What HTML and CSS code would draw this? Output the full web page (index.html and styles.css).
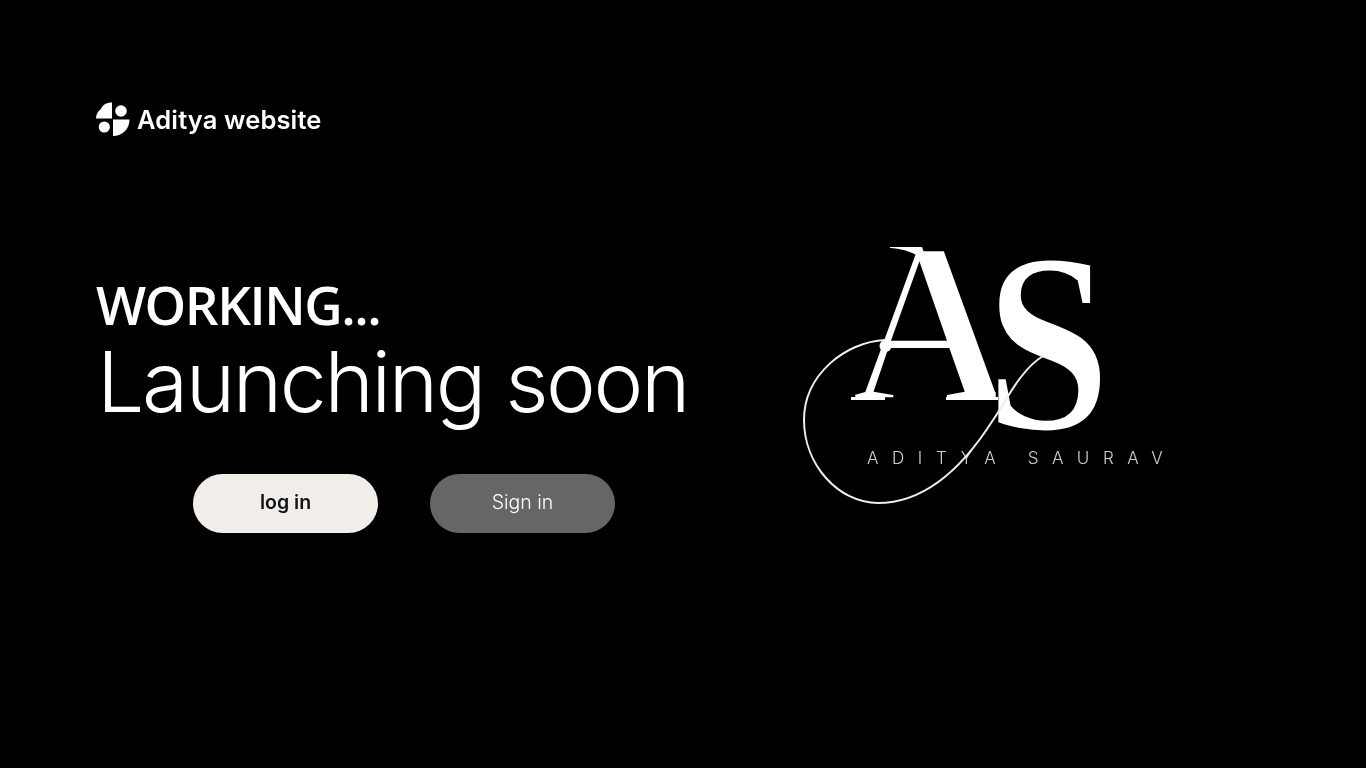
FILE: index.html
```html
<!DOCTYPE html>
<html lang="en">
<head>
<meta charset="utf-8">
<title>Aditya website</title>
<link rel="stylesheet" href="styles.css">
</head>
<body>
<div class="page">
  <header class="brand">
    <svg class="brand-icon" viewBox="0 0 34 34" aria-hidden="true">
      <path d="M16 .5V16.500H0C0 12.500 2 9 5 7C6.500 3 10 .5 16 .5Z"/>
      <circle cx="25" cy="9" r="5.800"/>
      <circle cx="8.300" cy="25" r="5.600"/>
      <path d="M17 17.500H33.500C33.500 27 26.500 34 17 34Z"/>
    </svg>
    <span class="brand-name">Aditya website</span>
  </header>
  <main class="hero">
    <section class="intro">
      <h2 class="kicker">WORKING...</h2>
      <h1 class="title">Launching soon</h1>
      <div class="actions">
        <a class="btn btn-light">log in</a>
        <a class="btn btn-dark">Sign in</a>
      </div>
    </section>
    <svg class="mark" viewBox="0 0 370 270" role="img" aria-label="AS Aditya Saurav logo">
      <text class="mark-a" x="50" y="160" textLength="160" lengthAdjust="spacingAndGlyphs">A</text>
      <text class="mark-s" x="185" y="190" textLength="126" lengthAdjust="spacingAndGlyphs">S</text>
      <path class="mark-serif" d="M90 7H122L128 24C118 13 104 9 90 8Z"/>
      <path class="mark-bar" d="M85 107H150"/>
      <path class="mark-foot" d="M51 158.500H85M146 158.500H198"/>
      <path class="mark-line" d="M85 100C45 102 4 135 4 180C4 224 38 263 78 263C122 263 160 232 193 180C205 163 220 130 243 116"/>
      <circle class="mark-dot" cx="85.500" cy="106" r="6"/>
      <text class="mark-name" x="67" y="224">ADITYA SAURAV</text>
    </svg>
  </main>
</div>
</body>
</html>
```
FILE: styles.css
```css
* { box-sizing: border-box; }
html, body { margin: 0; height: 100%; background: #000; }
body { color: #fff; font-family: "Inter", "Liberation Sans", sans-serif; overflow: hidden; }
.page { height: 768px; padding: 102px 0 0 96px; will-change: transform; }
.brand { display: flex; align-items: center; gap: 7px; height: 34px; }
.brand-icon { width: 34px; height: 34px; fill: #fff; }
.brand-name { font-family: "Inter", sans-serif; font-size: 25.500px; font-weight: 600; letter-spacing: 0.13px; }
.hero { display: flex; align-items: flex-start; margin-top: 104px; }
.intro { width: 704px; padding-top: 33px; }
.kicker { margin: 0; font-family: "Open Sans", sans-serif; font-size: 53px; line-height: 64px; font-weight: 600; letter-spacing: -1.500px; }
.title { margin: -3px 0 0 1px; font-family: "Inter", sans-serif; font-size: 84px; line-height: 96px; font-weight: 300; letter-spacing: -2.400px; }
.actions { display: flex; gap: 52px; margin: 44px 0 0 97px; }
.btn { display: flex; align-items: center; justify-content: center; width: 185px; height: 59px; padding-bottom: 3px; border-radius: 30px; font-size: 19.500px; }
.btn-light { background: #f1eee9; color: #111; font-weight: 600; }
.btn-dark { background: #666; color: #fff; font-weight: 300; }
.mark { width: 370px; height: 270px; }
.mark-a, .mark-s { font-family: "Liberation Serif", serif; font-weight: 700; fill: #fff; stroke: #000; }
.mark-a { font-size: 232px; stroke-width: 6.500px; }
.mark-s { font-size: 256px; stroke-width: 3px; }
.mark-serif { fill: #fff; }
.mark-bar { fill: none; stroke: #fff; stroke-width: 2px; }
.mark-foot { fill: none; stroke: #fff; stroke-width: 3px; }
.mark-line { fill: none; stroke: #eee; stroke-width: 2px; }
.mark-dot { fill: #fff; }
.mark-name { font-family: "Inter", sans-serif; font-size: 17px; font-weight: 300; letter-spacing: 13.600px; fill: #fff; opacity: 0.8; }
```
